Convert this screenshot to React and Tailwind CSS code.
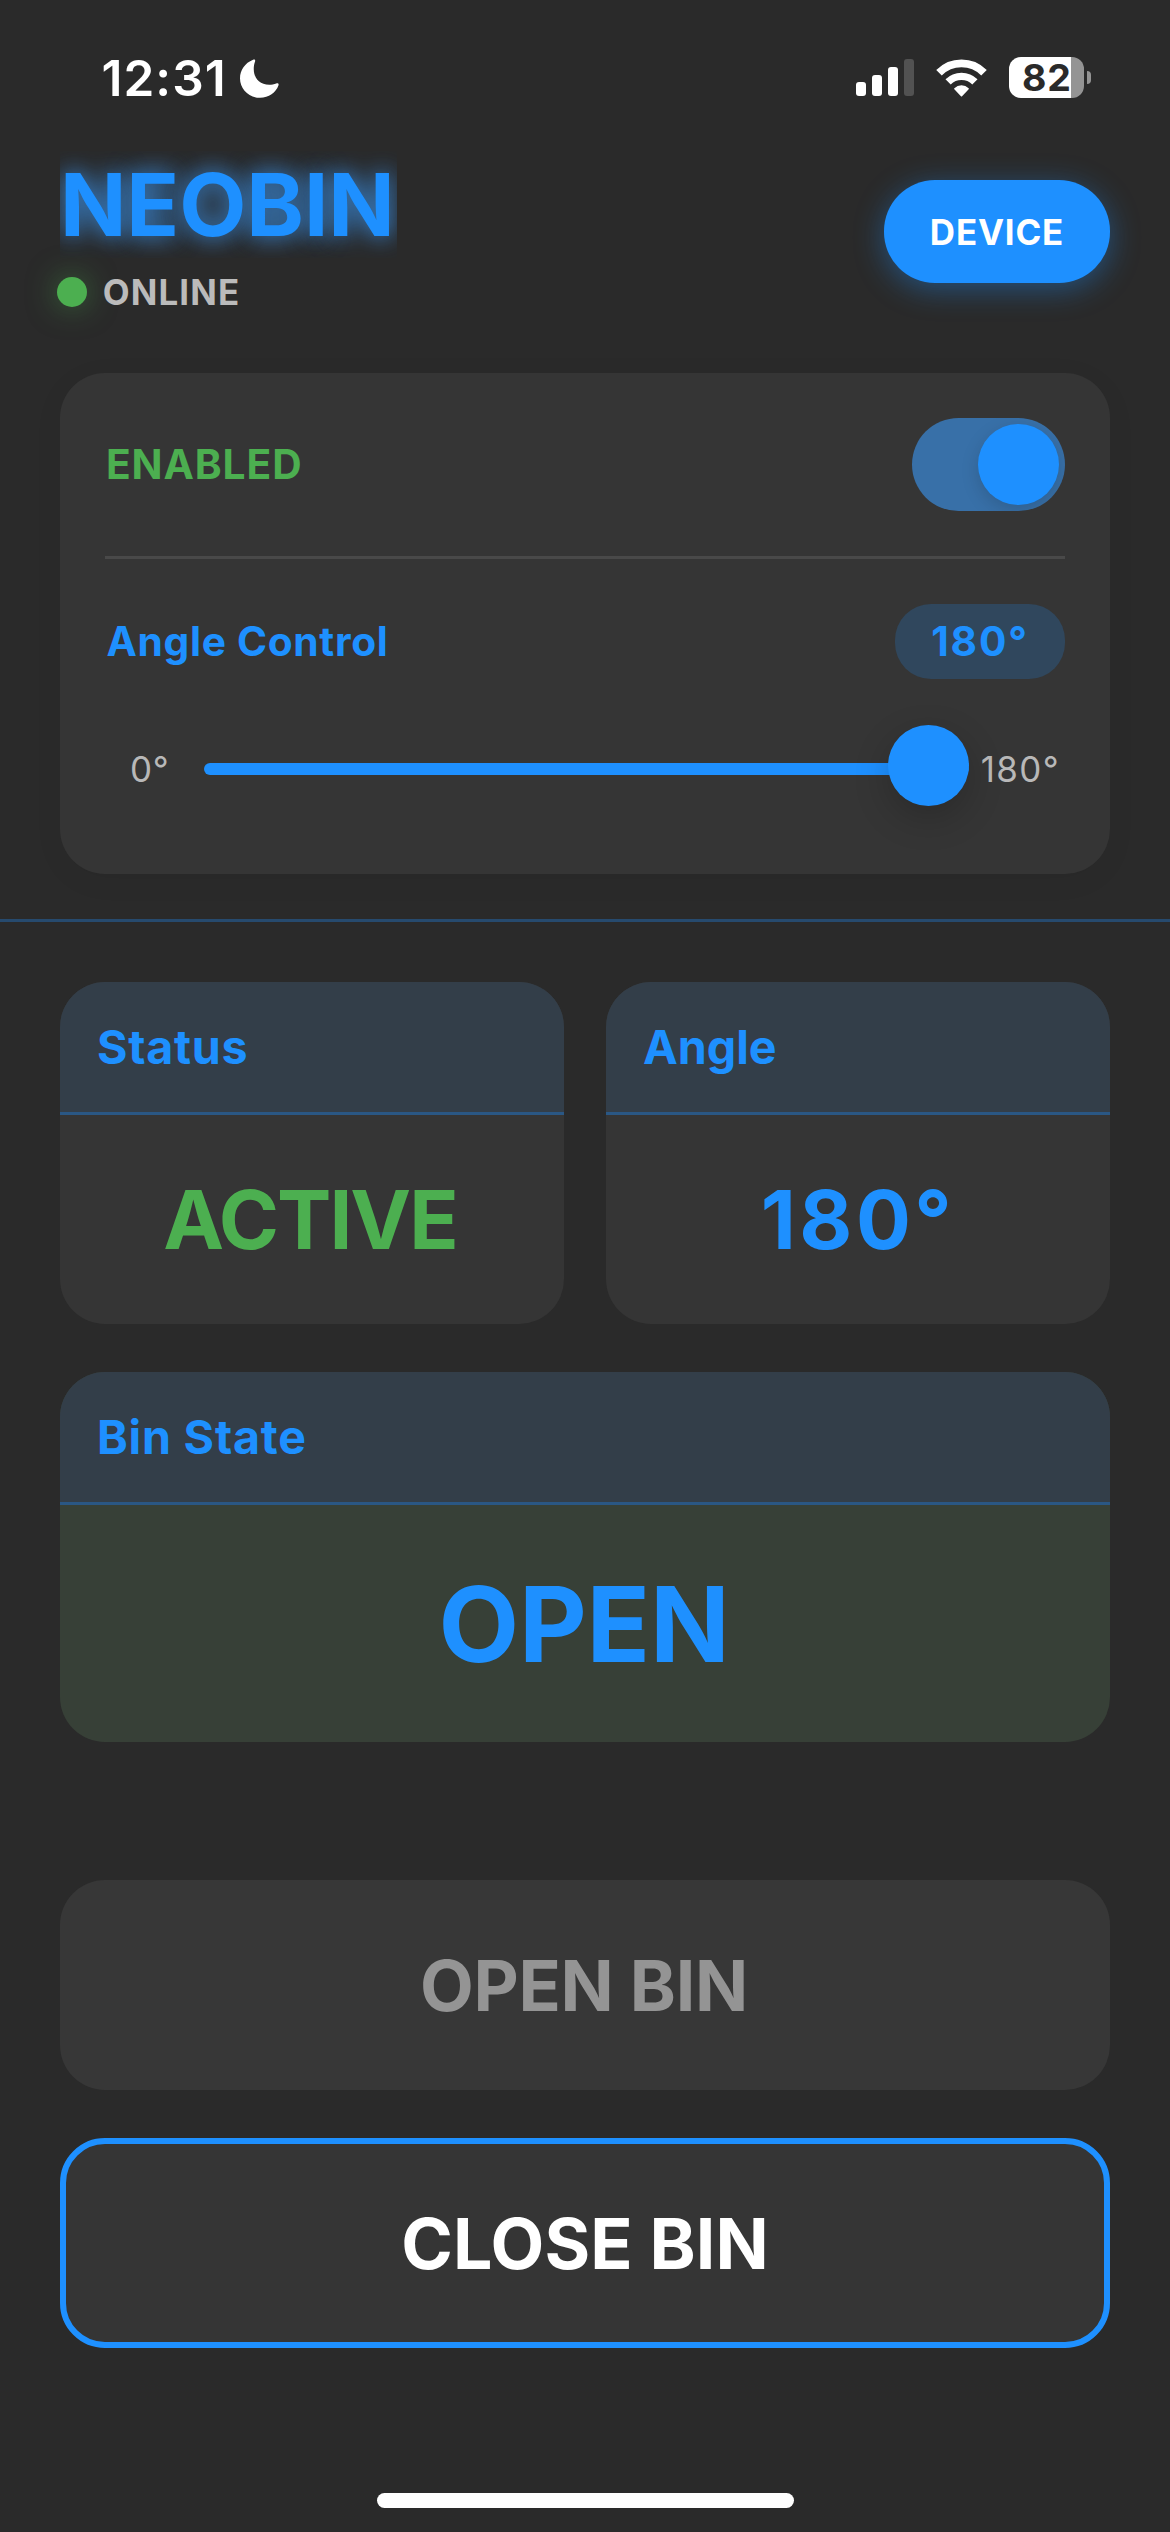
import React from "react";

function MoonIcon() {
  return (
    <svg viewBox="0 0 39.4 39.4" className="mt-[2px] ml-[13px] h-[39px] w-[39px]" fill="#fff">
      <path d="M13.2 .8C14.6 -.2 15.8 .8 15.2 2.4C14.2 5 13.9 7.5 13.9 10C13.9 19.5 20 26 29.5 26C32 26 34.4 25.6 36.6 24.7C38.3 24.1 39.4 25 38.9 26.6C36.3 34 29 39.2 20.3 39.2C9 39.2 0 30.6 0 19.5C0 11.5 5 4 13.2 .8Z" />
    </svg>
  );
}

function SignalIcon() {
  return (
    <div className="flex h-[37px] items-end gap-[6px]">
      <div className="h-[14px] w-[10px] rounded-[3px] bg-white" />
      <div className="h-[21px] w-[10px] rounded-[3px] bg-white" />
      <div className="h-[29px] w-[10px] rounded-[3px] bg-white" />
      <div className="h-[37px] w-[10px] rounded-[3px] bg-[#525252]" />
    </div>
  );
}

function WifiIcon() {
  return (
    <svg viewBox="0 0 51 38" className="ml-[22px] h-[38px] w-[51px]" fill="none" stroke="#fff">
      <path d="M3 13.8A31.8 31.8 0 0 1 48 13.8" strokeWidth="7.8" />
      <path d="M12.1 22.9A19 19 0 0 1 38.9 22.9" strokeWidth="7.4" />
      <path d="M25.5 36.6L18.9 29.8A9.6 9.6 0 0 1 32.1 29.8Z" fill="#fff" strokeWidth="1.6" strokeLinejoin="round" />
    </svg>
  );
}

function BatteryIcon() {
  return (
    <div className="ml-[22px] flex items-center">
      <div className="h-[41px] w-[75px] rounded-[12px] bg-[linear-gradient(to_right,#fff_62px,#949494_62px)] pl-[13px] text-[37.5px] leading-[41px] font-bold tracking-[0.89px] whitespace-nowrap text-[#2a2a2a]">
        82
      </div>
      <div className="ml-[3px] h-[13px] w-[4px] rounded-r-full bg-[#949494]" />
    </div>
  );
}

function StatusBar() {
  return (
    <div className="flex h-[151px] items-center justify-between pt-[4px] pr-[79px] pl-[101.5px]">
      <div className="flex items-center">
        <span className="pt-px text-[49.5px] leading-[60px] font-semibold tracking-[1.04px] text-white">12:31</span>
        <MoonIcon />
      </div>
      <div className="flex items-center">
        <SignalIcon />
        <WifiIcon />
        <BatteryIcon />
      </div>
    </div>
  );
}

function Header() {
  return (
    <header className="flex justify-between px-[60px]">
      <div>
        <h1 className="h-[107px] w-[337px] overflow-hidden text-[87.2px] leading-[107px] font-bold tracking-[-0.09px] whitespace-nowrap text-[#1e90ff] [text-shadow:0_0_26px_rgba(60,150,240,0.7),0_0_20px_rgba(60,150,240,0.4)]">
          NEOBIN
        </h1>
        <div className="mt-[10px] -ml-[3px] flex h-[48px] items-center">
          <div className="size-[30px] rounded-full bg-[#4caf50] shadow-[0_0_30px_rgba(76,175,80,0.5)]" />
          <span className="ml-[15.7px] text-[34.9px] leading-[48px] font-bold tracking-[1.15px] text-[#bbbbbb]">ONLINE</span>
        </div>
      </div>
      <button className="mt-[29px] h-[103px] w-[226px] rounded-[51px] bg-[#1e90ff] pt-px text-[34.9px] font-bold tracking-[0.85px] text-white shadow-[0_6px_30px_rgba(30,144,255,0.4)]">
        DEVICE
      </button>
    </header>
  );
}

function ControlPanel() {
  return (
    <section className="mx-[60px] mt-[57px] h-[501px] rounded-[45px] bg-[#353535] p-[45px] shadow-[0_6px_30px_rgba(0,0,0,0.05)]">
      <div className="flex h-[93px] items-center justify-between">
        <span className="pl-px text-[40.7px] leading-[52px] font-bold tracking-[0.9px] text-[#4caf50]">ENABLED</span>
        <div className="flex h-[93px] w-[153px] justify-end overflow-hidden rounded-full bg-[#3870a8] p-[6px]">
          <div className="size-[81px] rounded-full bg-[#1e90ff] shadow-[0_6px_18px_rgba(0,0,0,0.15)]" />
        </div>
      </div>
      <div className="mt-[45px] h-[3px] bg-[#494949]" />
      <div className="mt-[45px] flex h-[75px] items-center justify-between">
        <span className="pl-[1.5px] text-[40.7px] leading-[52px] font-bold tracking-[0.68px] text-[#1e90ff]">Angle Control</span>
        <div className="h-[75px] w-[170px] rounded-[36px] bg-[#30475d] text-center text-[40.7px] leading-[75px] font-bold tracking-[1.85px] text-[#1e90ff]">
          180°
        </div>
      </div>
      <div className="mt-[60px] flex h-[60px] items-center pl-[25px]">
        <span className="w-[74px] shrink-0 text-[34.9px] leading-[48px] tracking-[0.69px] text-[#b8b8b8]">0°</span>
        <div className="relative h-[12px] w-[765px] shrink-0 rounded-full bg-[#1e90ff]">
          <div className="absolute -top-[38px] right-0 size-[81px] rounded-full bg-[#1e90ff] shadow-[0_12px_36px_rgba(0,0,0,0.2)]" />
        </div>
        <span className="ml-[11.7px] text-[34.9px] leading-[48px] tracking-[1.4px] text-[#b8b8b8]">180°</span>
      </div>
    </section>
  );
}

function Card({ title, className, titleClass, children }) {
  return (
    <section className={`flex flex-col overflow-hidden rounded-[45px] ${className}`}>
      <div className={`h-[133px] border-b-[3px] border-[#2a5784] bg-[#333e49] pl-[37px] text-[46.6px] leading-[130px] font-bold text-[#1e90ff] ${titleClass}`}>
        {title}
      </div>
      <div className="flex flex-1 items-center justify-center">{children}</div>
    </section>
  );
}

export default function App() {
  return (
    <main className="flex h-[2532px] w-[1170px] flex-col overflow-hidden bg-[#2a2a2a] font-['Inter',sans-serif]">
      <StatusBar />
      <Header />
      <ControlPanel />
      <div className="mt-[45px] h-[3px] shrink-0 bg-[#264a6e]" />
      <div className="mx-[60px] mt-[60px] grid grid-cols-2 gap-[42px]">
        <Card title="Status" className="h-[342px] bg-[#353535]" titleClass="tracking-[0.7px]">
          <span className="pr-[4px] text-[81.5px] leading-[100px] font-bold tracking-[-1.97px] text-[#4caf50]">ACTIVE</span>
        </Card>
        <Card title="Angle" className="h-[342px] bg-[#353535]" titleClass="tracking-[0px]">
          <span className="text-[81.5px] leading-[100px] font-bold tracking-[3.49px] text-[#1e90ff]">180°</span>
        </Card>
      </div>
      <Card title="Bin State" className="mx-[60px] mt-[48px] h-[370px] bg-[#374037]" titleClass="tracking-[0.78px]">
        <span className="pt-px pr-[2px] text-[104.7px] leading-[120px] font-bold tracking-[-0.26px] text-[#1e90ff]">OPEN</span>
      </Card>
      <button className="mx-[60px] mt-[138px] h-[210px] rounded-[45px] bg-[#373737] pt-[3px] pr-[2px] text-[69.8px] font-bold tracking-[-0.27px] text-[#949494]">
        OPEN BIN
      </button>
      <button className="mx-[60px] mt-[48px] h-[210px] rounded-[45px] border-[6px] border-[#1e90ff] bg-[#353535] pt-[3px] text-[69.8px] font-bold tracking-[0.1px] text-white">
        CLOSE BIN
      </button>
      <div className="mx-auto mt-[145px] h-[15px] w-[417px] rounded-full bg-white" />
    </main>
  );
}
